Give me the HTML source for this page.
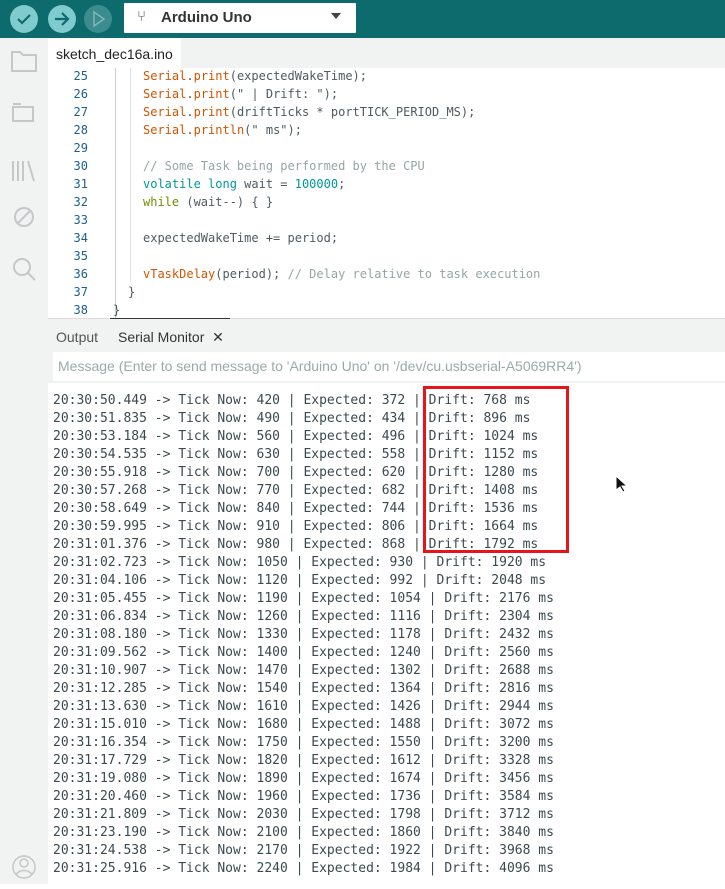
<!DOCTYPE html>
<html><head><meta charset="utf-8"><style>
*{margin:0;padding:0;box-sizing:border-box}
body{width:725px;height:884px;overflow:hidden;background:#fff;font-family:"Liberation Sans",sans-serif;position:relative}
.tb{position:absolute;left:0;top:0;width:725px;height:38px;background:#0e6b6d}
.btn{position:absolute;top:5px;width:28px;height:28px;border-radius:50%;background:#7fcbcd}
.sel{position:absolute;left:124px;top:3px;width:232px;height:30px;background:#fff;border-radius:1px}
.side{position:absolute;left:0;top:38px;width:48px;height:846px;background:#f1f2f2}
.tabbar{position:absolute;left:48px;top:38px;width:677px;height:30px;background:#f1f2f2}
.tab{position:absolute;left:48px;top:38px;width:133px;height:30px;background:#fff;font-size:14px;color:#222;padding:8px 0 0 8px}
.code{position:absolute;left:48px;top:68px;width:677px;height:250px;background:#fff;font-family:"DejaVu Sans Mono",monospace;font-size:12px}
.ln{position:absolute;left:0;width:40px;text-align:right;color:#1a5f8f}
.cl{position:absolute;white-space:pre;color:#4e5b61}
.o{color:#d35400}.t{color:#00979c}.c{color:#95a5a6}.k{color:#728e00}
.panel{position:absolute;left:48px;top:318px;width:677px;height:566px;background:#f1f2f2;border-top:1px solid #ddd}
.msg{position:absolute;left:53px;top:352px;width:672px;height:29px;background:#fff;color:#9aa;font-size:14px;padding:6px 0 0 5px}
.out{position:absolute;left:48px;top:383px;width:677px;height:501px;background:#fff;font-family:"DejaVu Sans Mono",monospace;font-size:13px;color:#3b4a50;white-space:pre;padding:9px 0 0 5px;line-height:18px}
</style></head><body>
<div class="tb"></div>
<div class="btn" style="left:10px"><svg width="28" height="28"><path d="M8 14l4 4 8-8" stroke="#0e6b6d" stroke-width="2.2" fill="none"/></svg></div>
<div class="btn" style="left:48px"><svg width="28" height="28"><path d="M7 14h13M14 8l6 6-6 6" stroke="#0e6b6d" stroke-width="2.2" fill="none"/></svg></div>
<div class="btn" style="left:84px;background:#3b8c8e"><svg width="28" height="28"><path d="M10 7l10 7-10 7z" stroke="#7fb5b6" stroke-width="1.5" fill="none"/></svg></div>
<div class="sel"><span style="position:absolute;left:13px;top:5px;color:#555;font-size:15px">⑂</span><span style="position:absolute;left:37px;top:6px;font-weight:bold;font-size:15px;color:#333">Arduino Uno</span><span style="position:absolute;left:207px;top:10px;border:5px solid transparent;border-top:6px solid #444"></span></div>
<div class="side">
<svg width="48" height="846" fill="none" stroke="#c4c8c9" stroke-width="2">
<path d="M12 14h8l3 3h13v16H12z"/><path d="M13 69h20v14H13zM13 66h8"/><path d="M13 123v20M18 123v20M23 123v20M28 123l6 20"/><circle cx="24" cy="179" r="9"/><path d="M18 185l12-12"/><circle cx="22" cy="229" r="8"/><path d="M28 235l7 7"/><circle cx="24" cy="829" r="11" stroke-width="1.5"/><circle cx="24" cy="825" r="4" stroke-width="1.5"/><path d="M16 837c3-6 13-6 16 0" stroke-width="1.5"/>
</svg></div>
<div class="tabbar"></div>
<div class="tab">sketch_dec16a.ino</div>
<div class="code">
<div style="position:absolute;left:67px;top:0;width:1px;height:250px;background:#ccc"></div>
<div style="position:absolute;left:82px;top:0;width:1px;height:214px;background:#e3e3e3"></div>
<div class="ln" style="top:1px">25</div><div class="cl" style="left:95px;top:1px"><span class="o">Serial</span>.<span class="o">print</span>(expectedWakeTime);</div>
<div class="ln" style="top:19px">26</div><div class="cl" style="left:95px;top:19px"><span class="o">Serial</span>.<span class="o">print</span>(" | Drift: ");</div>
<div class="ln" style="top:37px">27</div><div class="cl" style="left:95px;top:37px"><span class="o">Serial</span>.<span class="o">print</span>(driftTicks * portTICK_PERIOD_MS);</div>
<div class="ln" style="top:55px">28</div><div class="cl" style="left:95px;top:55px"><span class="o">Serial</span>.<span class="o">println</span>(" ms");</div>
<div class="ln" style="top:73px">29</div>
<div class="ln" style="top:91px">30</div><div class="cl c" style="left:95px;top:91px">// Some Task being performed by the CPU</div>
<div class="ln" style="top:109px">31</div><div class="cl" style="left:95px;top:109px"><span class="t">volatile long</span> wait = <span class="t">100000</span>;</div>
<div class="ln" style="top:127px">32</div><div class="cl" style="left:95px;top:127px"><span class="k">while</span> (wait--) { }</div>
<div class="ln" style="top:145px">33</div>
<div class="ln" style="top:163px">34</div><div class="cl" style="left:95px;top:163px">expectedWakeTime += period;</div>
<div class="ln" style="top:181px">35</div>
<div class="ln" style="top:199px">36</div><div class="cl" style="left:95px;top:199px"><span class="o">vTaskDelay</span>(period); <span class="c">// Delay relative to task execution</span></div>
<div class="ln" style="top:217px">37</div><div class="cl" style="left:80px;top:217px">}</div>
<div class="ln" style="top:235px">38</div><div class="cl" style="left:65px;top:235px">}</div>
</div>
<div class="panel">
<span style="position:absolute;left:8px;top:10px;font-size:14px;color:#555">Output</span>
<span style="position:absolute;left:70px;top:10px;font-size:14px;color:#333">Serial Monitor&nbsp; ✕</span>
<div style="position:absolute;left:62px;top:-1px;width:120px;height:1px;background:#333"></div>
</div>
<div class="msg">Message (Enter to send message to 'Arduino Uno' on '/dev/cu.usbserial-A5069RR4')</div>
<div class="out">20:30:50.449 -> Tick Now: 420 | Expected: 372 | Drift: 768 ms
20:30:51.835 -> Tick Now: 490 | Expected: 434 | Drift: 896 ms
20:30:53.184 -> Tick Now: 560 | Expected: 496 | Drift: 1024 ms
20:30:54.535 -> Tick Now: 630 | Expected: 558 | Drift: 1152 ms
20:30:55.918 -> Tick Now: 700 | Expected: 620 | Drift: 1280 ms
20:30:57.268 -> Tick Now: 770 | Expected: 682 | Drift: 1408 ms
20:30:58.649 -> Tick Now: 840 | Expected: 744 | Drift: 1536 ms
20:30:59.995 -> Tick Now: 910 | Expected: 806 | Drift: 1664 ms
20:31:01.376 -> Tick Now: 980 | Expected: 868 | Drift: 1792 ms
20:31:02.723 -> Tick Now: 1050 | Expected: 930 | Drift: 1920 ms
20:31:04.106 -> Tick Now: 1120 | Expected: 992 | Drift: 2048 ms
20:31:05.455 -> Tick Now: 1190 | Expected: 1054 | Drift: 2176 ms
20:31:06.834 -> Tick Now: 1260 | Expected: 1116 | Drift: 2304 ms
20:31:08.180 -> Tick Now: 1330 | Expected: 1178 | Drift: 2432 ms
20:31:09.562 -> Tick Now: 1400 | Expected: 1240 | Drift: 2560 ms
20:31:10.907 -> Tick Now: 1470 | Expected: 1302 | Drift: 2688 ms
20:31:12.285 -> Tick Now: 1540 | Expected: 1364 | Drift: 2816 ms
20:31:13.630 -> Tick Now: 1610 | Expected: 1426 | Drift: 2944 ms
20:31:15.010 -> Tick Now: 1680 | Expected: 1488 | Drift: 3072 ms
20:31:16.354 -> Tick Now: 1750 | Expected: 1550 | Drift: 3200 ms
20:31:17.729 -> Tick Now: 1820 | Expected: 1612 | Drift: 3328 ms
20:31:19.080 -> Tick Now: 1890 | Expected: 1674 | Drift: 3456 ms
20:31:20.460 -> Tick Now: 1960 | Expected: 1736 | Drift: 3584 ms
20:31:21.809 -> Tick Now: 2030 | Expected: 1798 | Drift: 3712 ms
20:31:23.190 -> Tick Now: 2100 | Expected: 1860 | Drift: 3840 ms
20:31:24.538 -> Tick Now: 2170 | Expected: 1922 | Drift: 3968 ms
20:31:25.916 -> Tick Now: 2240 | Expected: 1984 | Drift: 4096 ms</div>
<div style="position:absolute;left:423px;top:386px;width:146px;height:167px;border:3px solid #e8141c"></div>
<svg style="position:absolute;left:615px;top:475px" width="12" height="18"><path d="M1 1v14l4-3 3 5 2-1-3-5h5z" fill="#111" stroke="#fff" stroke-width="1"/></svg>
</body></html>
